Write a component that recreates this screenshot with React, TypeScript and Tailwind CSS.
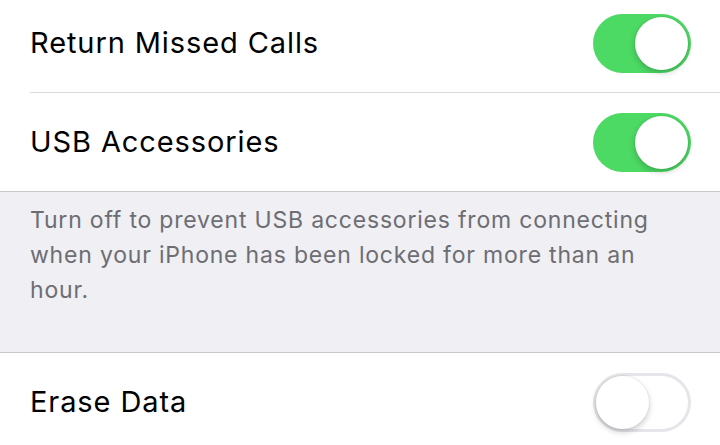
import React from 'react';

const Toggle = ({ on }: { on: boolean }) => (
  <div
    className={`relative h-[59px] w-[98px] shrink-0 rounded-full ${
      on ? 'bg-[#4cd964]' : 'bg-white shadow-[inset_0_0_0_3px_#e5e5ea]'
    }`}
  >
    <div
      className={`absolute top-[3px] h-[53px] w-[53px] rounded-full bg-white shadow-[0_3px_6px_rgba(0,0,0,0.2),0_0_0_1px_rgba(0,0,0,0.04)] ${
        on ? 'left-[42px]' : 'left-[3px]'
      }`}
    />
  </div>
);

const Row = ({ label, on }: { label: string; on: boolean }) => (
  <div className="flex h-[98px] items-center justify-between pr-[29px]">
    <span className="text-[29px] tracking-[0.9px] text-black">{label}</span>
    <Toggle on={on} />
  </div>
);

export default function App() {
  return (
    <div className="h-[445px] w-[720px] overflow-hidden bg-[#efeff4] font-['Inter',sans-serif]">
      {/* Top group */}
      <div className="-mt-[6px] border-b border-[#c8c7cc] bg-white pl-[30px]">
        <div className="border-b border-[#d9d9de]">
          <Row label="Return Missed Calls" on />
        </div>
        <Row label="USB Accessories" on />
      </div>

      {/* Footer note */}
      <div className="h-[160px] px-[30px] pt-[11px] text-[23px] leading-[35px] tracking-[0.8px] text-[#6d6d72]">
        Turn off to prevent USB accessories from connecting when your iPhone has been locked for more than an hour.
      </div>

      {/* Erase Data */}
      <div className="border-t border-[#c8c7cc] bg-white pl-[30px]">
        <Row label="Erase Data" on={false} />
      </div>
    </div>
  );
}
